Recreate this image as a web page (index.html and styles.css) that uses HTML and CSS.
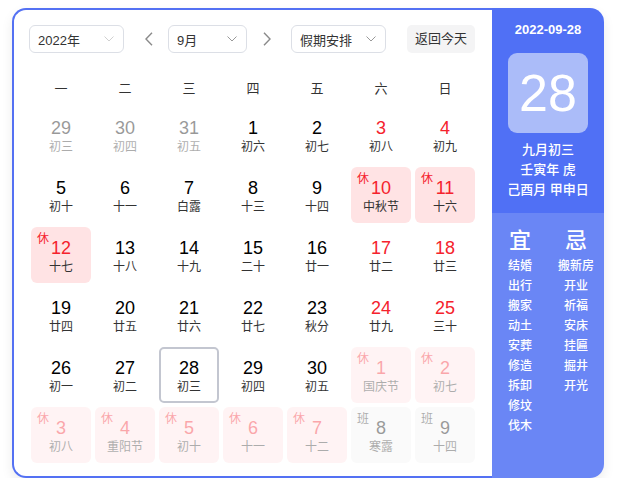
FILE: index.html
```html
<!DOCTYPE html>
<html lang="zh-CN">
<head>
<meta charset="utf-8">
<title>日历</title>
<link rel="stylesheet" href="styles.css">
</head>
<body>
<div class="cal">
  <div class="main">
    <div class="controls">
      <div class="select year">
        <span>2022年</span>
        <svg class="chev" width="10" height="6" viewBox="0 0 10 6"><path d="M0.5 0.5L5 5L9.5 0.5" fill="none" stroke="#d0d0d0" stroke-width="1"/></svg>
      </div>
      <div class="arrow a1"><svg width="8" height="14" viewBox="0 0 8 14"><path d="M7 0.8L1 7L7 13.2" fill="none" stroke="#8a8a8a" stroke-width="1.4"/></svg></div>
      <div class="select month">
        <span>9月</span>
        <svg class="chev" width="10" height="6" viewBox="0 0 10 6"><path d="M0.5 0.5L5 5L9.5 0.5" fill="none" stroke="#999" stroke-width="1"/></svg>
      </div>
      <div class="arrow a2"><svg width="8" height="14" viewBox="0 0 8 14"><path d="M1 0.8L7 7L1 13.2" fill="none" stroke="#8a8a8a" stroke-width="1.4"/></svg></div>
      <div class="select holiday">
        <span>假期安排</span>
        <svg class="chev" width="10" height="6" viewBox="0 0 10 6"><path d="M0.5 0.5L5 5L9.5 0.5" fill="none" stroke="#999" stroke-width="1"/></svg>
      </div>
      <div class="today-btn">返回今天</div>
    </div>
    <div class="weekdays">
      <div>一</div><div>二</div><div>三</div><div>四</div><div>五</div><div>六</div><div>日</div>
    </div>
    <div class="grid">
      <div class="cell other"><div class="num">29</div><div class="lunar">初三</div></div>
      <div class="cell other"><div class="num">30</div><div class="lunar">初四</div></div>
      <div class="cell other"><div class="num">31</div><div class="lunar">初五</div></div>
      <div class="cell"><div class="num">1</div><div class="lunar">初六</div></div>
      <div class="cell"><div class="num">2</div><div class="lunar">初七</div></div>
      <div class="cell weekend"><div class="num">3</div><div class="lunar">初八</div></div>
      <div class="cell weekend"><div class="num">4</div><div class="lunar">初九</div></div>

      <div class="cell"><div class="num">5</div><div class="lunar">初十</div></div>
      <div class="cell"><div class="num">6</div><div class="lunar">十一</div></div>
      <div class="cell"><div class="num">7</div><div class="lunar">白露</div></div>
      <div class="cell"><div class="num">8</div><div class="lunar">十三</div></div>
      <div class="cell"><div class="num">9</div><div class="lunar">十四</div></div>
      <div class="cell rest"><span class="badge">休</span><div class="num">10</div><div class="lunar">中秋节</div></div>
      <div class="cell rest"><span class="badge">休</span><div class="num">11</div><div class="lunar">十六</div></div>

      <div class="cell rest"><span class="badge">休</span><div class="num">12</div><div class="lunar">十七</div></div>
      <div class="cell"><div class="num">13</div><div class="lunar">十八</div></div>
      <div class="cell"><div class="num">14</div><div class="lunar">十九</div></div>
      <div class="cell"><div class="num">15</div><div class="lunar">二十</div></div>
      <div class="cell"><div class="num">16</div><div class="lunar">廿一</div></div>
      <div class="cell weekend"><div class="num">17</div><div class="lunar">廿二</div></div>
      <div class="cell weekend"><div class="num">18</div><div class="lunar">廿三</div></div>

      <div class="cell"><div class="num">19</div><div class="lunar">廿四</div></div>
      <div class="cell"><div class="num">20</div><div class="lunar">廿五</div></div>
      <div class="cell"><div class="num">21</div><div class="lunar">廿六</div></div>
      <div class="cell"><div class="num">22</div><div class="lunar">廿七</div></div>
      <div class="cell"><div class="num">23</div><div class="lunar">秋分</div></div>
      <div class="cell weekend"><div class="num">24</div><div class="lunar">廿九</div></div>
      <div class="cell weekend"><div class="num">25</div><div class="lunar">三十</div></div>

      <div class="cell"><div class="num">26</div><div class="lunar">初一</div></div>
      <div class="cell"><div class="num">27</div><div class="lunar">初二</div></div>
      <div class="cell today"><div class="num">28</div><div class="lunar">初三</div></div>
      <div class="cell"><div class="num">29</div><div class="lunar">初四</div></div>
      <div class="cell"><div class="num">30</div><div class="lunar">初五</div></div>
      <div class="cell rest other"><span class="badge">休</span><div class="num">1</div><div class="lunar">国庆节</div></div>
      <div class="cell rest other"><span class="badge">休</span><div class="num">2</div><div class="lunar">初七</div></div>

      <div class="cell rest other"><span class="badge">休</span><div class="num">3</div><div class="lunar">初八</div></div>
      <div class="cell rest other"><span class="badge">休</span><div class="num">4</div><div class="lunar">重阳节</div></div>
      <div class="cell rest other"><span class="badge">休</span><div class="num">5</div><div class="lunar">初十</div></div>
      <div class="cell rest other"><span class="badge">休</span><div class="num">6</div><div class="lunar">十一</div></div>
      <div class="cell rest other"><span class="badge">休</span><div class="num">7</div><div class="lunar">十二</div></div>
      <div class="cell work other"><span class="badge">班</span><div class="num">8</div><div class="lunar">寒露</div></div>
      <div class="cell work other"><span class="badge">班</span><div class="num">9</div><div class="lunar">十四</div></div>
    </div>
  </div>
  <div class="side">
    <div class="side-top">
      <div class="date">2022-09-28</div>
      <div class="bigday">28</div>
      <div class="lunar-info">
        <div>九月初三</div>
        <div>壬寅年 虎</div>
        <div>己酉月 甲申日</div>
      </div>
    </div>
    <div class="side-bottom">
      <div class="col">
        <div class="head">宜</div>
        <div>结婚</div><div>出行</div><div>搬家</div><div>动土</div><div>安葬</div><div>修造</div><div>拆卸</div><div>修坟</div><div>伐木</div>
      </div>
      <div class="col">
        <div class="head">忌</div>
        <div>搬新房</div><div>开业</div><div>祈福</div><div>安床</div><div>挂匾</div><div>掘井</div><div>开光</div>
      </div>
    </div>
  </div>
</div>
</body>
</html>
```

FILE: styles.css
```css
* { box-sizing: border-box; }
html, body { margin: 0; padding: 0; background: #fff; }
body {
  font-family: "Liberation Sans", "Noto Sans CJK SC", sans-serif;
  color: #333;
}
.cal {
  display: flex;
  width: 592px;
  height: 470px;
  margin: 8px 0 0 12px;
  border-radius: 14px;
  box-shadow: 0 5px 12px rgba(0, 0, 0, 0.08);
}
.main {
  width: 480px;
  height: 100%;
  border: 2px solid #5471f3;
  border-right: none;
  border-radius: 14px 0 0 14px;
  padding: 15px 0 0 15px;
  background: #fff;
}
.controls {
  display: flex;
  align-items: center;
  height: 28px;
}
.select {
  height: 28px;
  border: 1px solid #dcdfe6;
  border-radius: 6px;
  display: flex;
  align-items: center;
  justify-content: space-between;
  padding: 0 9px 0 8px;
  font-size: 13px;
  color: #333;
}
.select .chev { display: block; }
.year { width: 95px; }
.month { width: 79px; }
.holiday { width: 95px; }
.arrow {
  width: 16px;
  height: 28px;
  display: flex;
  align-items: center;
  justify-content: center;
}
.a1 { margin: 0 11px 0 17px; }
.a2 { margin: 0 16px 0 12px; }
.today-btn {
  margin-left: 21px;
  width: 68px;
  height: 28px;
  line-height: 28px;
  text-align: center;
  background: #f4f4f5;
  border-radius: 5px;
  font-size: 13px;
  color: #333;
}
.weekdays {
  display: grid;
  grid-template-columns: repeat(7, 60px);
  column-gap: 4px;
  margin: 22px 0 0 2px;
  height: 28px;
  line-height: 28px;
  text-align: center;
  font-size: 13px;
  color: #333;
}
.grid {
  display: grid;
  grid-template-columns: repeat(7, 60px);
  grid-auto-rows: 56px;
  gap: 4px;
  margin: 4px 0 0 2px;
}
.cell {
  position: relative;
  border-radius: 6px;
  padding-top: 10px;
  text-align: center;
}
.num {
  font-size: 18px;
  line-height: 22px;
  color: #000;
}
.lunar {
  font-size: 12px;
  line-height: 16px;
  color: #333;
}
.weekend .num { color: #f5222d; }
.rest { background: #ffe3e4; }
.rest .num { color: #f5222d; }
.rest .badge { color: #f5222d; }
.work { background: #f3f3f3; }
.work .badge { color: #333; }
.badge {
  position: absolute;
  left: 6px;
  top: 5px;
  font-size: 12px;
  line-height: 14px;
}
.other { opacity: 0.4; }
.today {
  border: 2px solid #c3c6d0;
  border-radius: 5px;
  padding-top: 8px;
}
.side {
  width: 112px;
  height: 100%;
  border-radius: 0 14px 14px 0;
  overflow: hidden;
  display: flex;
  flex-direction: column;
  color: #fff;
}
.side-top {
  height: 205px;
  background: #5070f5;
  padding-top: 12px;
  text-align: center;
}
.date {
  font-size: 13px;
  font-weight: bold;
  line-height: 20px;
}
.bigday {
  width: 80px;
  height: 80px;
  margin: 13px auto 0;
  background: #abbcf9;
  border-radius: 9px;
  font-size: 52px;
  line-height: 80px;
}
.lunar-info {
  margin-top: 7px;
  font-size: 13px;
  font-weight: 500;
  line-height: 20px;
}
.side-bottom {
  flex: 1;
  background: #6a86f5;
  display: flex;
  padding-top: 13px;
}
.col {
  width: 56px;
  text-align: center;
  font-size: 12px;
  font-weight: 500;
  line-height: 20px;
}
.col .head {
  font-size: 22px;
  line-height: 30px;
  font-weight: 500;
}
```
